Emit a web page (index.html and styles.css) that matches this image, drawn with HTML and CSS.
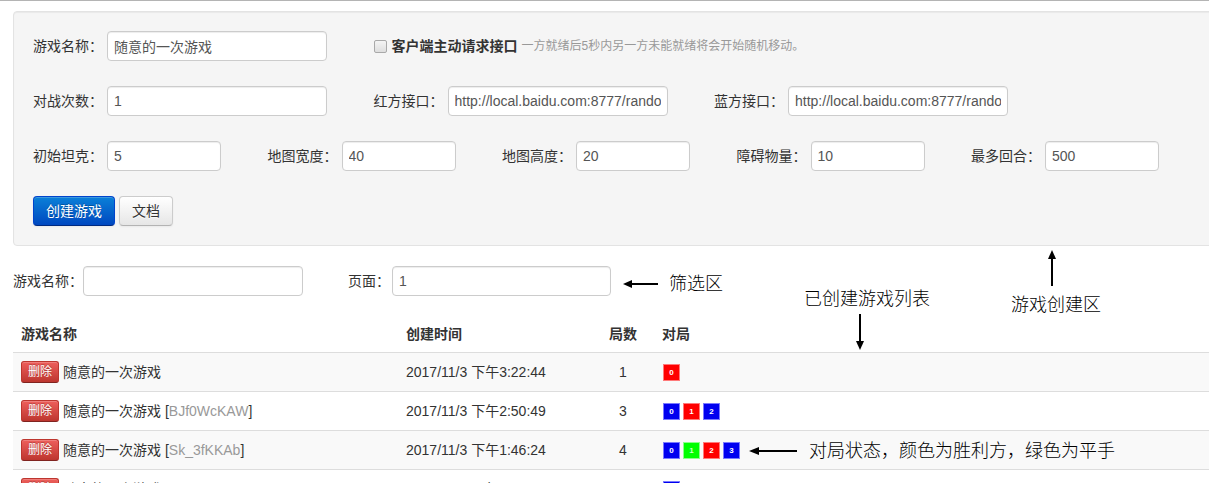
FILE: index.html
```html
<!DOCTYPE html>
<html lang="zh-CN">
<head>
<meta charset="utf-8">
<title>游戏列表</title>
<link rel="stylesheet" href="styles.css">
</head>
<body>
<div class="page">
  <div class="well">
    <div class="form-row">
      <div class="field"><span class="lbl">游戏名称：</span><input class="inp inp-wide" type="text" value="随意的一次游戏"></div>
      <div class="check">
        <span class="box"></span>
        <b class="check-title">客户端主动请求接口</b>
        <span class="help">一方就绪后5秒内另一方未能就绪将会开始随机移动。</span>
      </div>
    </div>
    <div class="form-row">
      <div class="field"><span class="lbl">对战次数：</span><input class="inp inp-wide" type="text" value="1"></div>
      <div class="field"><span class="lbl">红方接口：</span><input class="inp inp-wide" type="text" value="http://local.baidu.com:8777/random"></div>
      <div class="field"><span class="lbl">蓝方接口：</span><input class="inp inp-wide" type="text" value="http://local.baidu.com:8777/random"></div>
    </div>
    <div class="form-row">
      <div class="field"><span class="lbl">初始坦克：</span><input class="inp inp-small" type="text" value="5"></div>
      <div class="field"><span class="lbl">地图宽度：</span><input class="inp inp-small" type="text" value="40"></div>
      <div class="field"><span class="lbl">地图高度：</span><input class="inp inp-small" type="text" value="20"></div>
      <div class="field"><span class="lbl">障碍物量：</span><input class="inp inp-small" type="text" value="10"></div>
      <div class="field"><span class="lbl">最多回合：</span><input class="inp inp-small" type="text" value="500"></div>
    </div>
    <div class="form-row btn-row">
      <button class="btn btn-primary" type="button">创建游戏</button>
      <button class="btn" type="button">文档</button>
    </div>
  </div>

  <div class="filter">
    <div class="field"><span class="flbl">游戏名称：</span><input class="inp inp-wide" type="text" value=""></div>
    <div class="field"><span class="flbl flbl-page">页面：</span><input class="inp inp-page" type="text" value="1"></div>
  </div>

  <table class="games">
    <colgroup>
      <col class="c-name"><col class="c-date"><col class="c-count"><col>
    </colgroup>
    <thead>
      <tr><th>游戏名称</th><th>创建时间</th><th class="center">局数</th><th>对局</th></tr>
    </thead>
    <tbody>
      <tr>
        <td><div class="name-cell"><button class="btn-del" type="button">删除</button><span>随意的一次游戏</span></div></td>
        <td>2017/11/3 下午3:22:44</td>
        <td class="center">1</td>
        <td><div class="rounds"><span class="rd red">0</span></div></td>
      </tr>
      <tr>
        <td><div class="name-cell"><button class="btn-del" type="button">删除</button><span>随意的一次游戏 [<span class="gid">BJf0WcKAW</span>]</span></div></td>
        <td>2017/11/3 下午2:50:49</td>
        <td class="center">3</td>
        <td><div class="rounds"><span class="rd blue">0</span><span class="rd red">1</span><span class="rd blue">2</span></div></td>
      </tr>
      <tr>
        <td><div class="name-cell"><button class="btn-del" type="button">删除</button><span>随意的一次游戏 [<span class="gid">Sk_3fKKAb</span>]</span></div></td>
        <td>2017/11/3 下午1:46:24</td>
        <td class="center">4</td>
        <td><div class="rounds"><span class="rd blue">0</span><span class="rd green">1</span><span class="rd red">2</span><span class="rd blue">3</span></div></td>
      </tr>
      <tr>
        <td><div class="name-cell"><button class="btn-del" type="button">删除</button><span>随意的一次游戏</span></div></td>
        <td>2017/11/3 下午1:40:12</td>
        <td class="center">1</td>
        <td><div class="rounds"><span class="rd blue">0</span></div></td>
      </tr>
    </tbody>
  </table>

  <div class="note note-filter">
    <svg class="arrow-h" width="36" height="10" viewBox="0 0 36 10"><line x1="7" y1="5" x2="35" y2="5" stroke="#000" stroke-width="2"/><polygon points="0,5 9,1 9,9" fill="#000"/></svg>
    <span>筛选区</span>
  </div>
  <div class="note note-list">
    <span>已创建游戏列表</span>
  </div>
  <svg class="arrow-down" width="10" height="36" viewBox="0 0 10 36"><line x1="5" y1="0" x2="5" y2="28" stroke="#000" stroke-width="2"/><polygon points="5,36 1,27 9,27" fill="#000"/></svg>
  <svg class="arrow-up" width="10" height="36" viewBox="0 0 10 36"><line x1="5" y1="8" x2="5" y2="36" stroke="#000" stroke-width="2"/><polygon points="5,0 1,9 9,9" fill="#000"/></svg>
  <div class="note note-create"><span>游戏创建区</span></div>
  <div class="note note-rounds">
    <svg class="arrow-h" width="48" height="10" viewBox="0 0 48 10"><line x1="7" y1="5" x2="48" y2="5" stroke="#000" stroke-width="2"/><polygon points="0,5 10,1 10,9" fill="#000"/></svg>
    <span>对局状态，颜色为胜利方，绿色为平手</span>
  </div>
</div>
</body>
</html>
```

FILE: styles.css
```css
html, body {
  overflow: hidden;
}
body {
  margin: 0;
  border-top: 1px solid #b4b4b4;
  background: #fff;
  color: #333;
  font-family: "Liberation Sans", "Noto Sans CJK SC", sans-serif;
  font-size: 14px;
  line-height: 20px;
}
.page {
  position: relative;
  width: 1300px;
  padding: 10px 13px 0;
}
.well {
  background: #f5f5f5;
  border: 1px solid #e3e3e3;
  border-radius: 4px;
  box-shadow: inset 0 1px 1px rgba(0,0,0,0.05);
  padding: 19px;
}
.form-row {
  display: flex;
  align-items: center;
  gap: 46.5px;
  height: 30px;
  margin-bottom: 25px;
}
.form-row:last-child {
  margin-bottom: 0;
}
.field {
  display: flex;
  align-items: center;
}
.lbl {
  width: 74px;
  flex: none;
  color: #333;
  white-space: nowrap;
}
.inp {
  box-sizing: border-box;
  height: 30px;
  padding: 4px 6px;
  border: 1px solid #ccc;
  border-radius: 4px;
  background: #fff;
  box-shadow: inset 0 1px 1px rgba(0,0,0,0.075);
  color: #555;
  font-family: "Liberation Sans", "Noto Sans CJK SC", sans-serif;
  font-size: 14px;
  line-height: 20px;
  outline: none;
}
.inp-wide { width: 220px; }
.inp-small { width: 114px; }
.inp-page { width: 219px; }

.check {
  display: flex;
  align-items: center;
  white-space: nowrap;
}
.box {
  box-sizing: border-box;
  width: 13px;
  height: 13px;
  margin: 0 5px 0 0;
  border: 1px solid #a9a9a9;
  border-radius: 2px;
  background: linear-gradient(#f4f4f4, #dedede);
}
.check-title {
  font-weight: bold;
  color: #333;
}
.help {
  margin-left: 4px;
  color: #999;
  font-size: 12px;
}

.btn-row {
  gap: 4px;
}
.btn {
  box-sizing: border-box;
  height: 30px;
  padding: 4px 12px;
  border: 1px solid #ccc;
  border-bottom-color: #b3b3b3;
  border-radius: 4px;
  background: linear-gradient(#ffffff, #e6e6e6);
  box-shadow: inset 0 1px 0 rgba(255,255,255,0.2), 0 1px 2px rgba(0,0,0,0.05);
  color: #333;
  text-shadow: 0 1px 1px rgba(255,255,255,0.75);
  font-family: "Liberation Sans", "Noto Sans CJK SC", sans-serif;
  font-size: 14px;
  line-height: 20px;
  cursor: pointer;
}
.btn-primary {
  border-color: #0044cc #0044cc #002a80;
  background: linear-gradient(#0a80d8, #0048c0);
  color: #fff;
  text-shadow: 0 -1px 0 rgba(0,0,0,0.25);
}

.filter {
  display: flex;
  align-items: center;
  gap: 45px;
  height: 30px;
  margin-top: 20px;
}
.flbl {
  white-space: nowrap;
  color: #333;
}
.flbl-page {
  padding-right: 2px;
}

.games {
  margin-top: 20px;
  width: 1287px;
  border-collapse: collapse;
  border-spacing: 0;
  table-layout: fixed;
}
.c-name { width: 385px; }
.c-date { width: 194px; }
.c-count { width: 62px; }
.games th {
  padding: 8px;
  text-align: left;
  font-weight: bold;
  line-height: 20px;
}
.games td {
  padding: 8px;
  border-top: 1px solid #ddd;
  line-height: 22px;
  height: 22px;
  white-space: nowrap;
}
.games tbody tr:nth-child(odd) td {
  background: #f9f9f9;
}
.games .center {
  text-align: center;
}
.name-cell {
  display: flex;
  align-items: center;
  gap: 4px;
  height: 22px;
}
.btn-del {
  box-sizing: border-box;
  height: 22px;
  padding: 0 6px;
  border: 1px solid #bd362f;
  border-bottom-color: #802420;
  border-radius: 3px;
  background: linear-gradient(#ee5f5b, #bd362f);
  box-shadow: inset 0 1px 0 rgba(255,255,255,0.2);
  color: #fff;
  font-family: "Liberation Sans", "Noto Sans CJK SC", sans-serif;
  font-size: 12px;
  line-height: 20px;
  text-shadow: 0 -1px 0 rgba(0,0,0,0.25);
}
.gid {
  color: #999;
}
.rounds {
  display: flex;
  align-items: center;
  gap: 3px;
  height: 22px;
  padding-left: 1px;
}
.rd {
  box-sizing: border-box;
  width: 17px;
  height: 17px;
  border: 1px solid rgba(255,255,255,0.45);
  color: #fff;
  font-size: 8px;
  line-height: 15px;
  text-align: center;
  font-weight: bold;
}
.rd.red { background: #ff0000; border-color: #ff7a7a; }
.rd.blue { background: #0000f0; border-color: #7a7aff; }
.rd.green { background: #00ff00; border-color: #8cff8c; color: #c8ffc8; }

.note {
  position: absolute;
  display: flex;
  align-items: center;
  color: #000;
  font-size: 18px;
  font-weight: 300;
  line-height: 24px;
  white-space: nowrap;
}
.note-filter {
  left: 623px;
  top: 271px;
  gap: 10px;
}
.note-list {
  left: 804px;
  top: 286px;
}
.note-create {
  left: 1011px;
  top: 292px;
}
.note-rounds {
  left: 749px;
  top: 438px;
  gap: 12px;
}
.arrow-down {
  position: absolute;
  left: 855px;
  top: 313px;
}
.arrow-up {
  position: absolute;
  left: 1047px;
  top: 249px;
}
```
